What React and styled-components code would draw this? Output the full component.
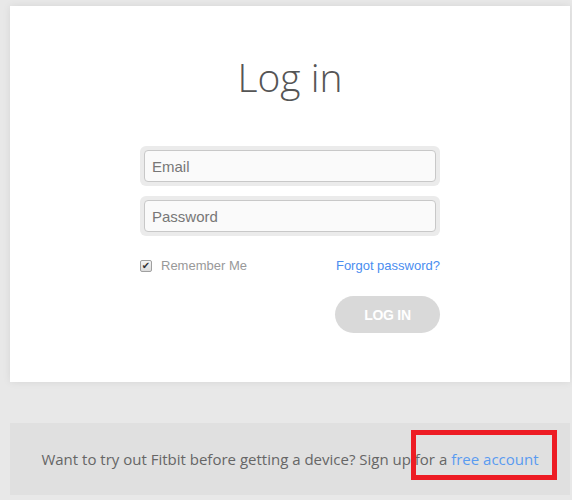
import React from 'react'
import styled, { createGlobalStyle } from 'styled-components'

const GlobalStyle = createGlobalStyle`
  html, body {
    margin: 0;
    padding: 0;
    background: #e8e8e8;
  }
  * { box-sizing: border-box; }
`

const Page = styled.div`
  width: 572px;
  height: 500px;
  padding: 6px 2px 0 10px;
  display: flex;
  flex-direction: column;
  gap: 41px;
  overflow: hidden;
`

const Card = styled.section`
  height: 376px;
  background: #fff;
  box-shadow: 0 0 8px rgba(0, 0, 0, 0.08);
  display: flex;
  flex-direction: column;
  align-items: center;
  padding-top: 46px;
`

const Title = styled.h1`
  margin: 0 0 44px;
  font-family: "Open Sans", sans-serif;
  font-weight: 300;
  font-size: 39px;
  line-height: 50px;
  color: #555;
`

const Form = styled.form`
  width: 300px;
  display: flex;
  flex-direction: column;
`

const FieldRing = styled.div`
  padding: 4px;
  background: #ebebeb;
  border-radius: 6px;
  margin-bottom: 10px;
`

const Input = styled.input`
  display: block;
  width: 100%;
  height: 32px;
  padding: 0 7px;
  border: 1px solid #c8c8c8;
  border-radius: 4px;
  background: #fafafa;
  font-family: "Liberation Sans", Arial, sans-serif;
  font-size: 15px;
  color: #555;
  outline: none;

  &::placeholder {
    color: #777;
  }
`

const OptionsRow = styled.div`
  display: flex;
  align-items: center;
  justify-content: space-between;
  margin-top: 12px;
  font-family: "Liberation Sans", Arial, sans-serif;
  font-size: 13px;
`

const Remember = styled.label`
  display: flex;
  align-items: center;
  gap: 9px;
  color: #999;
`

const HiddenCheck = styled.input`
  display: none;
`

const CheckBox = styled.span`
  width: 12px;
  height: 12px;
  border: 1px solid #a0a0a0;
  border-radius: 2px;
  background: linear-gradient(#f4f4f4, #dcdcdc);
  display: flex;
  align-items: center;
  justify-content: center;
  font-family: "DejaVu Sans", sans-serif;
  font-size: 10px;
  line-height: 1;
  color: #333;
`

const Link = styled.a`
  color: ${p => p.$inline ? '#5a9bf0' : '#4a8df0'};
  text-decoration: none;
`

const ButtonRow = styled.div`
  display: flex;
  justify-content: flex-end;
  margin-top: 23px;
`

const Button = styled.button`
  width: 105px;
  height: 37px;
  border: none;
  border-radius: 19px;
  background: #d9d9d9;
  color: #fff;
  font-family: "Liberation Sans", Arial, sans-serif;
  font-weight: bold;
  font-size: 14px;
  letter-spacing: -0.3px;
`

const Footer = styled.footer`
  position: relative;
  height: 72px;
  background: #e0e0e0;
  display: flex;
  align-items: center;
  justify-content: center;
  font-family: "Open Sans", sans-serif;
  font-size: 15px;
  color: #666;
`

const Highlight = styled.div`
  position: absolute;
  left: 401px;
  top: 7px;
  width: 146px;
  height: 50px;
  border: 5px solid #ed1c24;
`

export default function App() {
  return (
    <>
      <GlobalStyle />
      <Page>
        <Card>
          <Title>Log in</Title>
          <Form onSubmit={e => e.preventDefault()}>
            <FieldRing>
              <Input type="text" placeholder="Email" />
            </FieldRing>
            <FieldRing>
              <Input type="password" placeholder="Password" />
            </FieldRing>
            <OptionsRow>
              <Remember>
                <HiddenCheck type="checkbox" defaultChecked />
                <CheckBox>✔</CheckBox>
                Remember Me
              </Remember>
              <Link href="#">Forgot password?</Link>
            </OptionsRow>
            <ButtonRow>
              <Button type="submit">LOG IN</Button>
            </ButtonRow>
          </Form>
        </Card>
        <Footer>
          <span>
            Want to try out Fitbit before getting a device? Sign up for a{' '}
            <Link $inline href="#">free account</Link>
          </span>
          <Highlight />
        </Footer>
      </Page>
    </>
  )
}
